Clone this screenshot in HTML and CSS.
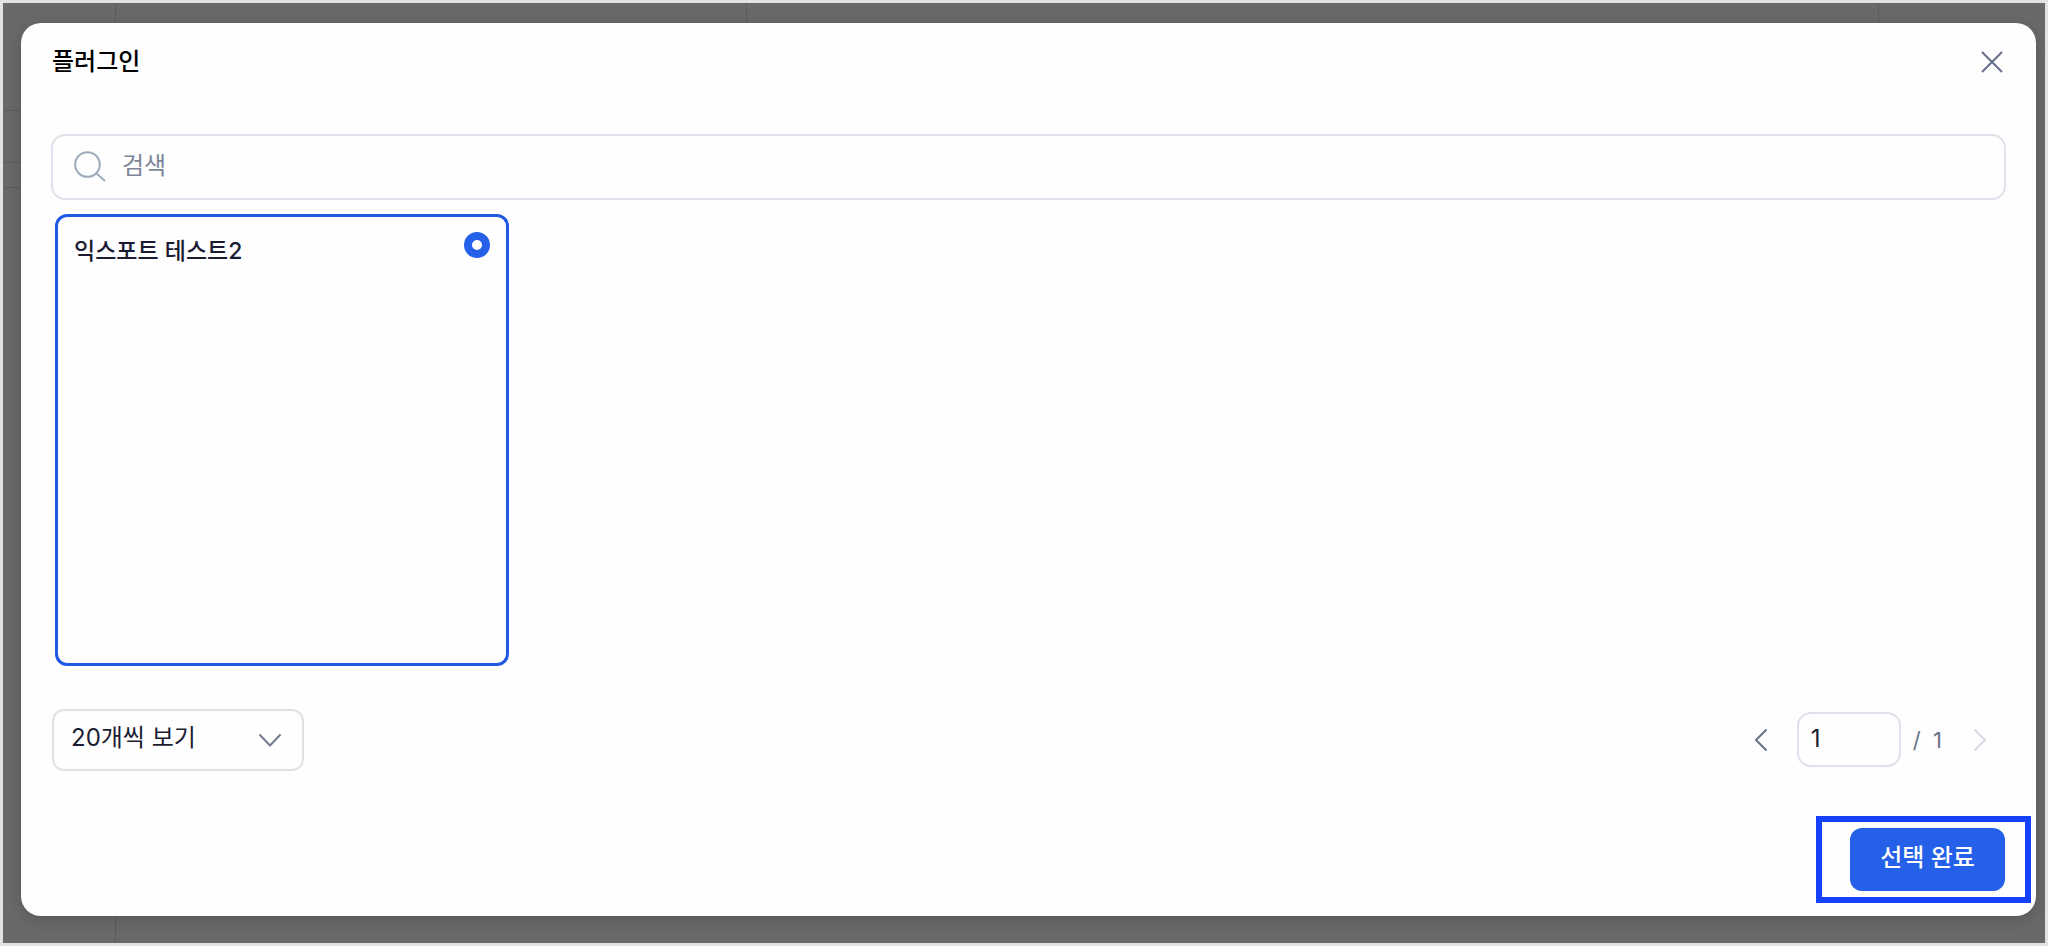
FILE: index.html
```html
<!DOCTYPE html>
<html lang="ko">
<head>
<meta charset="utf-8">
<meta name="viewport" content="width=device-width, initial-scale=1">
<title>플러그인</title>
<link rel="stylesheet" href="styles.css">
</head>
<body>
<div class="backdrop">
  <section class="modal" role="dialog" aria-modal="true" aria-labelledby="modal-title">
    <header class="modal-header">
      <h1 class="modal-title" id="modal-title">플러그인</h1>
      <button class="icon-button" type="button" aria-label="닫기">
        <svg width="22" height="22" viewBox="0 0 22 22"><path d="M1 1L21 21M21 1L1 21"/></svg>
      </button>
    </header>

    <label class="search">
      <svg class="search-icon" width="32" height="32" viewBox="0 0 32 32"><circle cx="13.500" cy="13.500" r="12.300"/><path d="M22 22L31 30"/></svg>
      <input class="search-input" type="search" placeholder="검색" aria-label="검색">
    </label>

    <div class="card-grid">
      <label class="card">
        <span class="card-title">익스포트 테스트2</span>
        <input class="card-radio" type="radio" name="plugin" checked>
      </label>
    </div>

    <div class="list-controls">
      <div class="page-size">
        <select class="page-size-select" aria-label="페이지당 개수">
          <option>20개씩 보기</option>
        </select>
        <svg class="page-size-arrow" width="24" height="14" viewBox="0 0 24 14"><path d="M1.500 1.500L12 12.500L22.500 1.500"/></svg>
      </div>
      <nav class="pager" aria-label="페이지">
        <button class="icon-button" type="button" aria-label="이전">
          <svg width="14" height="24" viewBox="0 0 14 24"><path d="M12.500 1.500L2 12L12.500 22.500"/></svg>
        </button>
        <input class="page-input" type="text" value="1" aria-label="현재 페이지">
        <span class="page-total">/&nbsp; 1</span>
        <button class="icon-button" type="button" aria-label="다음" disabled>
          <svg width="14" height="24" viewBox="0 0 14 24"><path d="M1.500 1.500L12 12L1.500 22.500"/></svg>
        </button>
      </nav>
    </div>

    <footer class="modal-footer">
      <div class="highlight">
        <button class="submit" type="button">선택 완료</button>
      </div>
    </footer>
  </section>
</div>
</body>
</html>
```
FILE: styles.css
```css
* {
  box-sizing: border-box;
}

body {
  margin: 0;
  font-family: Inter, "Noto Sans CJK KR", sans-serif;
  font-size: 24px;
  line-height: 32px;
  color: #1b1c33;
}

input,
select,
button {
  font: inherit;
  color: inherit;
}

svg {
  display: block;
  fill: none;
  stroke: currentColor;
  stroke-width: 2;
}

/* Page edge, dimmed page and its faint dividers */
.backdrop {
  display: flex;
  min-height: 100vh;
  padding: 20px 9px 27px 18px;
  border: 3px solid #e3e3e4;
  background:
    linear-gradient(#5c5c5c, #5c5c5c) 112px 0 / 1px 100% no-repeat,
    linear-gradient(#5c5c5c, #5c5c5c) 743px 0 / 1px 20px no-repeat,
    linear-gradient(#5c5c5c, #5c5c5c) 1875px 0 / 1px 20px no-repeat,
    linear-gradient(#5c5c5c, #5c5c5c) 0 107px / 18px 1px no-repeat,
    linear-gradient(#5c5c5c, #5c5c5c) 0 159px / 18px 1px no-repeat,
    linear-gradient(#5c5c5c, #5c5c5c) 0 184px / 18px 1px no-repeat,
    #696969;
}

.modal {
  display: flex;
  flex: 1;
  flex-direction: column;
  padding: 0 30px 25px;
  border-radius: 20px;
  background: #fefefe;
  box-shadow: 0 4px 16px rgba(0, 0, 0, 0.16);
}

.modal-header {
  display: flex;
  align-items: center;
  justify-content: space-between;
  height: 78px;
  margin-bottom: 33px;
  padding: 0 3px 0 1px;
}

.modal-title {
  margin: 0;
  color: #000;
  font-size: 24px;
  font-weight: 500;
}

.icon-button {
  display: grid;
  padding: 0;
  border: 0;
  background: none;
  color: #667085;
}

.icon-button:disabled {
  color: #d5d9e2;
}

.search {
  display: flex;
  align-items: center;
  gap: 16px;
  height: 66px;
  padding: 0 21px;
  border: 2px solid #dfe2ea;
  border-radius: 14px;
}

.search-icon {
  color: #9caabc;
}

.search-input {
  flex: 1;
  padding: 0 0 2px;
  border: 0;
  outline: 0;
  background: none;
}

.search-input::placeholder {
  color: #7d8698;
  opacity: 1;
}

.card-grid {
  display: grid;
  grid-template-columns: repeat(4, 1fr);
  gap: 44px;
  margin: 14px 4px 43px;
}

.card {
  display: flex;
  align-items: flex-start;
  justify-content: space-between;
  aspect-ratio: 454 / 452;
  padding: 15px 16px;
  border: 3px solid #1f5ae0;
  border-radius: 12px;
}

.card-title {
  padding-top: 3px;
  font-size: 23px;
  font-weight: 500;
}

.card-radio {
  width: 26px;
  height: 26px;
  margin: 0;
  border: 8px solid #2460e8;
  border-radius: 50%;
  background: #fff;
  appearance: none;
}

.list-controls {
  display: flex;
  align-items: center;
  justify-content: space-between;
  padding: 0 1px;
}

.page-size {
  display: grid;
  align-items: center;
  width: 252px;
}

.page-size-select,
.page-size-arrow {
  grid-area: 1 / 1;
}

.page-size-select {
  height: 62px;
  padding: 0 17px 4px;
  border: 2px solid #dfe1e6;
  border-radius: 12px;
  background: none;
  appearance: none;
}

.page-size-arrow {
  justify-self: end;
  margin-right: 22px;
  color: #747b90;
  pointer-events: none;
}

.pager {
  display: flex;
  align-items: center;
  padding-right: 18px;
}

.page-input {
  width: 104px;
  height: 55px;
  margin: 0 12px 0 29px;
  padding: 0 12px 2px;
  border: 2px solid #dfe2ea;
  border-radius: 14px;
  background: none;
}

.page-total {
  margin-right: 31px;
  color: #6a7387;
  font-size: 22px;
}

.modal-footer {
  display: flex;
  justify-content: flex-end;
  margin-top: auto;
  padding-right: 1px;
}

.highlight {
  position: relative;
}

.highlight::after {
  position: absolute;
  inset: -12px -26px -12px -34px;
  border: 6px solid #1641fb;
  content: "";
  pointer-events: none;
}

.submit {
  display: block;
  width: 155px;
  height: 63px;
  padding: 0 0 4px;
  border: 0;
  border-radius: 12px;
  background: #2460e8;
  color: #fff;
  font-weight: 500;
}
```
